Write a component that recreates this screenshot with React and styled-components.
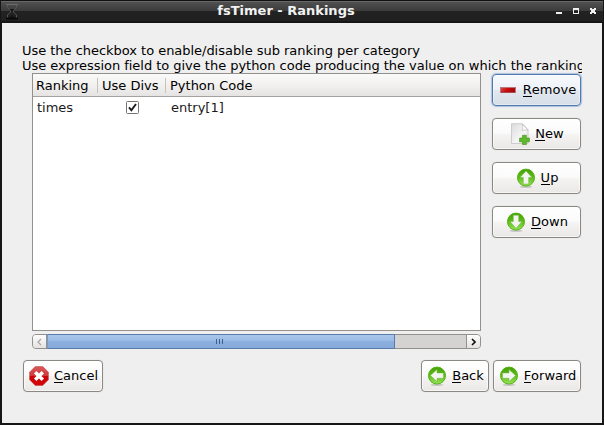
import React from 'react';
import styled, { createGlobalStyle, css } from 'styled-components';

const GlobalStyle = createGlobalStyle`
  * { box-sizing: border-box; }
  body { margin: 0; overflow: hidden; background: #161616; }
`;

const Window = styled.div`
  width: 604px;
  height: 425px;
  display: flex;
  flex-direction: column;
  background: #161616;
  font: 13px/15px "DejaVu Sans", sans-serif;
  color: #000;
  padding: 0 2px 2px;
`;

const TitleBar = styled.header`
  height: 23px;
  flex: none;
  display: grid;
  grid-template-columns: 28px 1fr 60px;
  align-items: center;
  margin: 0 -1px;
  border-top: 1px solid #111;
  border-bottom: 2px solid #161616;
  background: linear-gradient(#686868 0, #686868 1px, #505050 1px, #3b3b3b 10px, #222 10px, #202020 100%);
`;

const Title = styled.h1`
  margin: 0;
  font-size: 13px;
  line-height: 20px;
  font-weight: bold;
  text-align: center;
  color: #f2f2f2;
`;

const AppGlyph = styled.svg`
  display: block;
  margin-left: 4px;
`;

const WindowControls = styled.svg`
  display: block;
  justify-self: end;
`;

const Content = styled.main`
  flex: 1;
  display: flex;
  flex-direction: column;
  background: #efefef;
  padding: 20px 21px 31px;
`;

const Hint = styled.p`
  margin: 0 0 0 -1px;
  width: 560px;
  height: 30px;
  overflow: hidden;
  white-space: pre;
  letter-spacing: -0.03px;
`;

const Editor = styled.section`
  display: flex;
  justify-content: space-between;
  height: 276px;
  margin: 0 0 0 9px;
`;

const ListPane = styled.div`
  width: 449px;
`;

const Table = styled.div`
  height: 258px;
  border: 1px solid #94908c;
  background: #fff;
`;

const HeaderRow = styled.div`
  display: flex;
  height: 23px;
  border-bottom: 1px solid #a5a19e;
  background: linear-gradient(#fafafa, #f2f1f0 50%, #e6e4e3);
`;

const HeaderCell = styled.div`
  width: ${(p) => p.$width}px;
  padding: 4px 0 0 ${(p) => p.$inset ?? 3}px;
  white-space: nowrap;
  background: linear-gradient(#c5c2c0, #c5c2c0) right 4px / 1px 15px no-repeat;
  &:last-child { flex: 1; background: none; }
`;

const Row = styled.div`
  display: flex;
  height: 21px;
`;

const Cell = styled.div`
  width: ${(p) => p.$width}px;
  padding: 3px 0 0 4px;
  color: #1a1a1a;
`;

const CheckCell = styled(Cell)`
  display: flex;
  justify-content: center;
  padding: 4px 0 0 0;
`;

const ScrollBar = styled.div`
  display: flex;
  height: 15px;
  margin-top: 3px;
  border: 1px solid #94908c;
  border-radius: 4px;
  background: #d5d3d1;
`;

const Stepper = styled.div`
  width: 14px;
  flex: none;
  display: flex;
  align-items: center;
  justify-content: center;
  background: linear-gradient(#fdfdfd, #e4e2e1);
  border-radius: ${(p) => (p.$end ? '0 3px 3px 0' : '3px 0 0 3px')};
  border-${(p) => (p.$end ? 'left' : 'right')}: 1px solid #94908c;
`;

const Track = styled.div`
  flex: 1;
`;

const Thumb = styled.div`
  width: 348px;
  height: 15px;
  margin-top: -1px;
  padding-right: 3px;
  border: 1px solid #587cab;
  border-left-color: #7799c8;
  display: flex;
  align-items: center;
  justify-content: center;
  gap: 2px;
  background: linear-gradient(#a9c6eb, #9bbbe4 45%, #8aaedd 50%, #86aad9);
`;

const Grip = styled.i`
  width: 1px;
  height: 5px;
  background: #3d5f91;
`;

const ButtonColumn = styled.div`
  display: flex;
  flex-direction: column;
  gap: 12px;
  padding-top: 1px;
`;

const Button = styled.button`
  width: ${(p) => p.$width}px;
  height: 32px;
  display: flex;
  align-items: center;
  justify-content: center;
  gap: 5px;
  padding: 0 0 0 1px;
  border: 1px solid #8b8783;
  border-radius: 4px;
  background: linear-gradient(#fff, #fafafa 50%, #f5f4f3 50%, #eae8e7);
  box-shadow: inset 0 0 0 1px rgba(255, 255, 255, 0.6), 0 0 1px #ccc;
  font: inherit;
  color: #000;
  ${(p) => p.$focused && css`
    border-color: #5279ad;
    background: linear-gradient(#f7f9fc, #edf1f7 50%, #e2e8f0 50%, #d8dee7);
    box-shadow: inset 0 0 0 1px rgba(255, 255, 255, 0.4), 0 0 1px 1px #a9c1e0;
  `}
`;

const ButtonText = styled.span`
  position: relative;
  top: -1px;
`;

const Mnemonic = styled.span`
  display: inline-block;
  height: 15px;
  background: linear-gradient(#000, #000) 0 100% / 100% 1px no-repeat;
`;

const Actions = styled.footer`
  display: flex;
  gap: 4px;
  margin-top: 11px;
`;

const Spacer = styled.div`
  flex: 1;
`;

const Icon = styled.svg`
  flex: none;
  display: block;
`;

function ArrowIcon({ angle }) {
  const id = `green-${angle}`;
  return (
    <Icon width="20" height="20" viewBox="0 0 20 20">
      <defs>
        <linearGradient id={id} x1="0" y1="0" x2="0" y2="1">
          <stop offset="0" stopColor="#48a008" />
          <stop offset="0.45" stopColor="#5cb818" />
          <stop offset="1" stopColor="#98e35a" />
        </linearGradient>
      </defs>
      <ellipse cx="10" cy="18.8" rx="6.5" ry="1.2" fill="#000" opacity="0.15" />
      <circle cx="10" cy="9.6" r="8.5" fill={`url(#${id})`} stroke="#4fb30c" strokeWidth="1" />
      <path
        d="M10 3 L16 9.6 H12.7 V16 H7.3 V9.6 H4 Z"
        fill="#f4f4f1"
        stroke="#6db83c"
        strokeWidth="0.5"
        transform={`rotate(${angle} 10 9.6)`}
      />
    </Icon>
  );
}

function RemoveIcon() {
  return (
    <Icon width="20" height="20" viewBox="0 0 20 20">
      <defs>
        <linearGradient id="minus" x1="0" y1="0" x2="1" y2="0.3">
          <stop offset="0" stopColor="#d75050" />
          <stop offset="0.5" stopColor="#c80e12" />
          <stop offset="1" stopColor="#a90509" />
        </linearGradient>
      </defs>
      <rect x="2.5" y="7.5" width="15" height="5" fill="url(#minus)" stroke="#b9777a" />
      <path d="M3 12.5 H17" stroke="#a74b50" />
    </Icon>
  );
}

function NewIcon() {
  return (
    <Icon width="20" height="22" viewBox="0 0 20 22">
      <defs>
        <linearGradient id="page" x1="0" y1="0" x2="1" y2="1">
          <stop offset="0" stopColor="#dcdcdc" />
          <stop offset="0.6" stopColor="#f5f5f5" />
          <stop offset="1" stopColor="#d9d9d9" />
        </linearGradient>
      </defs>
      <path d="M1.5 0.7 H12.5 L18 6.5 V20.5 H1.5 Z" fill="url(#page)" stroke="#c4c4c4" strokeWidth="0.8" strokeLinejoin="round" />
      <path d="M12.3 0.9 C13 4 13 6 12 7.5 C14 6.7 16 6.7 18 7.3 Z" fill="#fff" stroke="#bdbdbd" strokeWidth="0.7" />
      <path
        d="M12.5 12.3 H16.3 V15.1 H19.4 V18.7 H16.3 V21.5 H12.5 V18.7 H9.6 V15.1 H12.5 Z"
        fill="#62b82c"
        stroke="#4a9a1c"
        strokeWidth="0.7"
        strokeLinejoin="round"
      />
    </Icon>
  );
}

function CancelIcon() {
  return (
    <Icon width="20" height="20" viewBox="0 0 20 20">
      <defs>
        <linearGradient id="stop" x1="0" y1="0" x2="0" y2="1">
          <stop offset="0" stopColor="#d9595c" />
          <stop offset="0.48" stopColor="#d1383b" />
          <stop offset="0.52" stopColor="#c90407" />
          <stop offset="1" stopColor="#d40408" />
        </linearGradient>
      </defs>
      <path d="M6.2 0.6 H13.8 L19.4 6.2 V13.8 L13.8 19.4 H6.2 L0.6 13.8 V6.2 Z" fill="url(#stop)" stroke="#c0474a" strokeWidth="0.6" />
      <path d="M6.2 6.2 L13.8 13.8 M13.8 6.2 L6.2 13.8" stroke="#fff" strokeWidth="3.5" />
    </Icon>
  );
}

function Checkbox() {
  return (
    <Icon width="13" height="13" viewBox="0 0 13 13">
      <rect x="0.5" y="0.5" width="12" height="12" rx="1" fill="#fff" stroke="#77736f" />
      <path d="M3 6.4 L5.4 9.3 L10 3" fill="none" stroke="#1a1a1a" strokeWidth="1.9" />
    </Icon>
  );
}

function ActionButton({ label, icon, width, focused }) {
  return (
    <Button type="button" $width={width} $focused={focused}>
      {icon}
      <ButtonText>
        <Mnemonic>{label[0]}</Mnemonic>
        {label.slice(1)}
      </ButtonText>
    </Button>
  );
}

export default function App() {
  return (
    <>
      <GlobalStyle />
      <Window>
        <TitleBar>
          <AppGlyph width="14" height="18" viewBox="0 0 14 18">
            <path d="M1 2.5 H13" stroke="#6c6c6c" strokeWidth="1" />
            <path
              d="M2.5 3 V5.5 L5.5 8.5 V10 L2.5 13 V16 M11.5 3 V5.5 L8.5 8.5 V10 L11.5 13 V16"
              fill="none"
              stroke="#5a5a5a"
              strokeWidth="0.9"
            />
            <path d="M4.5 7 H9.5 L7 9.5 Z M3.5 16 L7 13 L10.5 16 Z" fill="#161616" />
            <path d="M1 16.5 H13" stroke="#0a0a0a" strokeWidth="2" />
          </AppGlyph>
          <Title>fsTimer - Rankings</Title>
          <WindowControls width="48" height="20" viewBox="0 0 48 20">
            <path d="M1 11 H7 V13 H1 Z" fill="#eee" />
            <path d="M18 7 H24 V13 H18 Z M19 9 V12 H23 V9 Z" fill="#eee" fillRule="evenodd" />
            <path d="M35 7 H37 V8 H39 V7 H41 V9 H40 V11 H41 V13 H39 V12 H37 V13 H35 V11 H36 V9 H35 Z" fill="#eee" />
          </WindowControls>
        </TitleBar>
        <Content>
          <Hint>
            {'Use the checkbox to enable/disable sub ranking per category\nUse expression field to give the python code producing the value on which the ranking'}
          </Hint>
          <Editor>
            <ListPane>
              <Table>
                <HeaderRow>
                  <HeaderCell $width={65}>Ranking</HeaderCell>
                  <HeaderCell $width={68} $inset={4}>Use Divs</HeaderCell>
                  <HeaderCell $inset={4}>Python Code</HeaderCell>
                </HeaderRow>
                <Row>
                  <Cell $width={65}>times</Cell>
                  <CheckCell $width={69}>
                    <Checkbox />
                  </CheckCell>
                  <Cell>entry[1]</Cell>
                </Row>
              </Table>
              <ScrollBar>
                <Stepper>
                  <svg width="5" height="8" viewBox="0 0 5 8">
                    <path d="M4 1 L1 4 L4 7" fill="none" stroke="#aaa7a4" strokeWidth="1.3" />
                  </svg>
                </Stepper>
                <Track>
                  <Thumb>
                    <Grip />
                    <Grip />
                    <Grip />
                  </Thumb>
                </Track>
                <Stepper $end>
                  <svg width="5" height="8" viewBox="0 0 5 8">
                    <path d="M1 1 L4 4 L1 7" fill="none" stroke="#111" strokeWidth="1.6" />
                  </svg>
                </Stepper>
              </ScrollBar>
            </ListPane>
            <ButtonColumn>
              <ActionButton label="Remove" icon={<RemoveIcon />} width={89} focused />
              <ActionButton label="New" icon={<NewIcon />} width={89} />
              <ActionButton label="Up" icon={<ArrowIcon angle={0} />} width={89} />
              <ActionButton label="Down" icon={<ArrowIcon angle={180} />} width={89} />
            </ButtonColumn>
          </Editor>
          <Actions>
            <ActionButton label="Cancel" icon={<CancelIcon />} width={80} />
            <Spacer />
            <ActionButton label="Back" icon={<ArrowIcon angle={270} />} width={68} />
            <ActionButton label="Forward" icon={<ArrowIcon angle={90} />} width={88} />
          </Actions>
        </Content>
      </Window>
    </>
  );
}
